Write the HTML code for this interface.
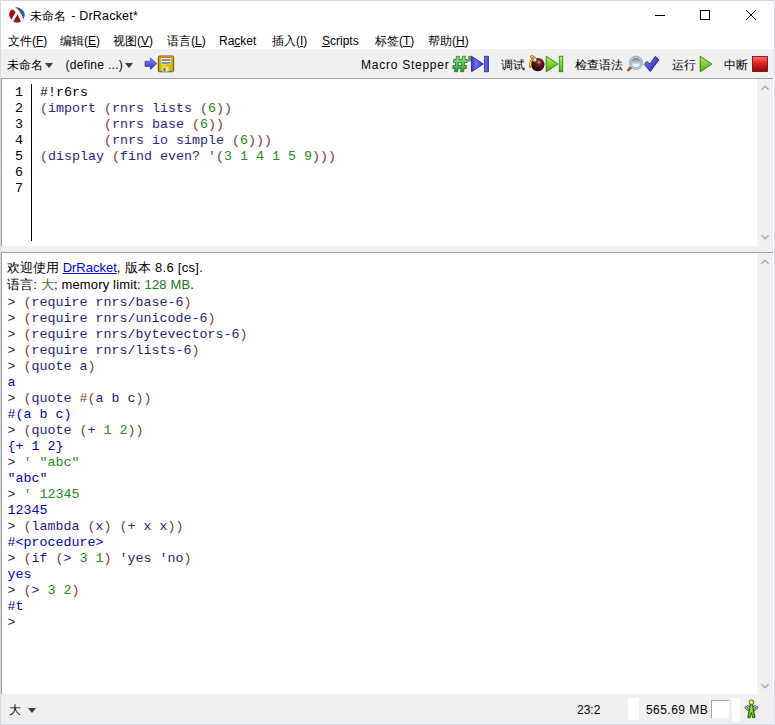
<!DOCTYPE html>
<html><head><meta charset="utf-8">
<style>
*{margin:0;padding:0;box-sizing:border-box}
html,body{width:775px;height:725px;overflow:hidden;background:#fff}
body{position:relative;font-family:"Liberation Sans",sans-serif;font-size:12px;color:#000}
.a{position:absolute;white-space:pre}
.ui{font-family:"Liberation Sans",sans-serif;font-size:12px;line-height:14px}
.mono{font-family:"Liberation Mono",monospace;font-size:13.333px;line-height:16px}
.p{color:#843c24}.s{color:#262680}.c{color:#228b22}.o{color:#0000c8}.k{color:#000}.pr{color:#303030}
.tri{position:absolute;width:0;height:0;border-left:4px solid transparent;border-right:4px solid transparent;border-top:5px solid #3c3c3c}
.sb{position:absolute;background:#f0f0f0}
</style></head><body>
<!-- window borders -->
<div class="a" style="left:0;top:0;width:775px;height:1px;background:#d6d8dc"></div>
<div class="a" style="left:0;top:0;width:1px;height:725px;background:#d6d8dc"></div>
<div class="a" style="left:774px;top:0;width:1px;height:725px;background:#dcdde0"></div>

<!-- logo -->
<svg class="a" style="left:9px;top:7px" width="16" height="16" viewBox="0 0 16 16">
<path d="M6.1 0.1 C10 0.2 15.5 3 15.7 7.2 C15.8 9 15.2 10.8 14.3 12 C12.8 7.5 10 3 6.1 0.1Z" fill="#3a55a8"/>
<path d="M3.2 2.3 C4.5 3 5.7 4 6.6 5.4 L2.4 12.5 C0.8 11 0 8.8 0.2 6.8 C0.5 5 1.5 3.3 3.2 2.3Z" fill="#9c1016"/>
<path d="M8.5 7.2 L12 14.5 C10.5 15.5 8.5 15.8 6.6 15.6 C5.8 15.5 5 15.2 4.4 14.6 Z" fill="#9c1016"/>
</svg>
<div class="a ui" style="left:30px;top:9px">未命名<span style="font-size:12.5px;letter-spacing:0.2px;margin-left:1.5px"> - DrRacket*</span></div>

<!-- window controls -->
<div class="a" style="left:655px;top:15px;width:10px;height:1px;background:#000"></div>
<div class="a" style="left:700px;top:10px;width:10px;height:10px;border:1px solid #000"></div>
<svg class="a" style="left:745px;top:9px" width="12" height="12" viewBox="0 0 12 12"><path d="M1 1L11 11M11 1L1 11" stroke="#000" stroke-width="1"/></svg>

<!-- menu -->
<div class="a ui" style="left:8px;top:34px">文件(<u>F</u>)</div>
<div class="a ui" style="left:60px;top:34px">编辑(<u>E</u>)</div>
<div class="a ui" style="left:113px;top:34px">视图(<u>V</u>)</div>
<div class="a ui" style="left:167px;top:34px">语言(<u>L</u>)</div>
<div class="a ui" style="left:219px;top:34px">Ra<u>c</u>ket</div>
<div class="a ui" style="left:272px;top:34px">插入(<u>I</u>)</div>
<div class="a ui" style="left:322px;top:34px"><u>S</u>cripts</div>
<div class="a ui" style="left:375px;top:34px">标签(<u>T</u>)</div>
<div class="a ui" style="left:428px;top:34px">帮助(<u>H</u>)</div>

<!-- toolbar -->
<div class="a" style="left:1px;top:49px;width:773px;height:29px;background:#f0f0f0"></div>
<div class="a ui" style="left:7px;top:57.6px">未命名</div>
<div class="tri" style="left:45px;top:63px"></div>
<div class="a ui" style="left:65.5px;top:57.6px;letter-spacing:0.3px">(define ...)</div>
<div class="tri" style="left:125px;top:63px"></div>
<svg class="a" style="left:144px;top:55px" width="32" height="18" viewBox="0 0 32 18">
<defs><linearGradient id="ga" x1="0" y1="0" x2="0" y2="1"><stop offset="0" stop-color="#8a8cff"/><stop offset="1" stop-color="#2a2ec0"/></linearGradient>
<linearGradient id="gf" x1="0" y1="0" x2="1" y2="0"><stop offset="0" stop-color="#b89a00"/><stop offset="0.3" stop-color="#f0d820"/><stop offset="1" stop-color="#c8a800"/></linearGradient></defs>
<path d="M1 6.2H6.5V3L12.8 8.5L6.5 14.5V11.5H1Z" fill="url(#ga)" stroke="#2a2a90" stroke-width="0.6"/>
<rect x="14.3" y="1" width="15.4" height="15.8" rx="1.5" fill="url(#gf)" stroke="#5a4800" stroke-width="0.9"/>
<rect x="17" y="1.2" width="10" height="8" fill="#fffbd0"/>
<rect x="17" y="1.2" width="10" height="1.8" fill="#f07010"/>
<rect x="17.5" y="4.2" width="9" height="1.8" fill="#8080a8"/>
<rect x="17.5" y="7" width="9" height="1.8" fill="#8080a8"/>
<rect x="18.5" y="12" width="6" height="4.5" fill="#e0e0e0"/>
<rect x="19.5" y="13" width="2" height="3" fill="#8a7000"/>
</svg>

<div class="a ui" style="left:361px;top:57.6px;letter-spacing:0.75px">Macro Stepper</div>
<svg class="a" style="left:452px;top:55px" width="38" height="18" viewBox="0 0 38 18">
<defs><linearGradient id="gg" x1="0" y1="0" x2="0" y2="1"><stop offset="0" stop-color="#90f090"/><stop offset="1" stop-color="#2a9a2a"/></linearGradient>
<linearGradient id="gb" x1="0" y1="0" x2="1" y2="0"><stop offset="0" stop-color="#3a3ad0"/><stop offset="0.4" stop-color="#7070f8"/><stop offset="1" stop-color="#3030b8"/></linearGradient></defs>
<path d="M3.5 1.3H6.5V4.5H9.5V1.3H12.5V4.5H14.8V7.5H12.5V10.5H14.8V13.5H12.5V16.7H9.5V13.5H6.5V16.7H3.5V13.5H1.2V10.5H3.5V7.5H1.2V4.5H3.5Z M6.5 7.5V10.5H9.5V7.5Z" fill="url(#gg)" stroke="#1a5a1a" stroke-width="0.7" fill-rule="evenodd" transform="translate(8 9) skewX(-7) translate(-8 -9)"/>
<path d="M16.6 1.3H19.2L18.4 6.2H16.4Z" fill="#50c050" stroke="#1a5a1a" stroke-width="0.5"/>
<path d="M19.5 1.2L31.3 9L19.5 16.8Z" fill="url(#gb)" stroke="#202080" stroke-width="0.8"/>
<rect x="32.6" y="1.2" width="3.8" height="15.6" fill="url(#gb)" stroke="#202080" stroke-width="0.7"/>
</svg>

<div class="a ui" style="left:501px;top:57.6px">调试</div>
<svg class="a" style="left:528px;top:55px" width="36" height="18" viewBox="0 0 36 18">
<defs><radialGradient id="gbm" cx="0.58" cy="0.32" r="0.75"><stop offset="0" stop-color="#f0a8a8"/><stop offset="0.22" stop-color="#7a2222"/><stop offset="0.65" stop-color="#3a0808"/><stop offset="1" stop-color="#120202"/></radialGradient>
<linearGradient id="ggr" x1="0" y1="0" x2="0" y2="1"><stop offset="0" stop-color="#b0f060"/><stop offset="1" stop-color="#50b010"/></linearGradient></defs>
<circle cx="9.8" cy="9.6" r="6.7" fill="url(#gbm)"/>
<ellipse cx="6.3" cy="4.3" rx="2.6" ry="2.2" transform="rotate(40 6.3 4.3)" fill="#d8e0e8" stroke="#505860" stroke-width="0.6"/>
<path d="M3.2 1.6C5 0.8 5.6 2.6 4.6 4C3.6 5.5 2.2 6.5 2.6 8.5C2.8 9.6 2.4 10.8 2.1 11.5" fill="none" stroke="#7a5a00" stroke-width="2.3" stroke-linecap="round"/>
<path d="M3.2 1.6C5 0.8 5.6 2.6 4.6 4C3.6 5.5 2.2 6.5 2.6 8.5C2.8 9.6 2.4 10.8 2.1 11.5" fill="none" stroke="#ffd000" stroke-width="1.2" stroke-linecap="round"/>
<path d="M18.2 1.2L30 9L18.2 16.8Z" fill="url(#ggr)" stroke="#2a6a00" stroke-width="0.8"/>
<rect x="31.2" y="1.2" width="3.6" height="15.6" fill="url(#ggr)" stroke="#2a6a00" stroke-width="0.7"/>
</svg>

<div class="a ui" style="left:575px;top:57.6px">检查语法</div>
<svg class="a" style="left:626px;top:55px" width="34" height="18" viewBox="0 0 34 18">
<defs><linearGradient id="gm" x1="0" y1="0" x2="0" y2="1"><stop offset="0" stop-color="#606868"/><stop offset="0.55" stop-color="#c8d8d8"/><stop offset="0.7" stop-color="#f0fffa"/><stop offset="1" stop-color="#d8f0ec"/></linearGradient>
<linearGradient id="gc" x1="0" y1="0" x2="1" y2="1"><stop offset="0" stop-color="#8080ff"/><stop offset="1" stop-color="#2020a0"/></linearGradient></defs>
<path d="M2.3 15L5 12.3" stroke="#b05a20" stroke-width="2.8" stroke-linecap="round"/>
<circle cx="10" cy="7.8" r="5.7" fill="url(#gm)" stroke="#b8c8e0" stroke-width="2"/><circle cx="10" cy="7.8" r="6.7" fill="none" stroke="#7890b0" stroke-width="0.6"/><circle cx="10" cy="7.8" r="4.7" fill="none" stroke="#8898b0" stroke-width="0.5"/>
<path d="M18.3 9.3L20.8 6.5L24 9L29.3 1.3L33 4.8L24.3 16.5Z" fill="url(#gc)" stroke="#18187a" stroke-width="0.8" stroke-linejoin="round"/>
</svg>

<div class="a ui" style="left:672px;top:57.6px">运行</div>
<svg class="a" style="left:699px;top:55px" width="14" height="18" viewBox="0 0 14 18">
<path d="M1.2 1.2L13 9L1.2 16.8Z" fill="url(#ggr)" stroke="#2a6a00" stroke-width="0.8"/>
</svg>
<div class="a ui" style="left:724px;top:57.6px">中断</div>
<svg class="a" style="left:752px;top:56px" width="16" height="16" viewBox="0 0 16 16">
<defs><linearGradient id="gr" x1="0" y1="0" x2="0" y2="1"><stop offset="0" stop-color="#ff7070"/><stop offset="0.45" stop-color="#e02020"/><stop offset="1" stop-color="#900808"/></linearGradient></defs>
<rect x="0.5" y="0.5" width="15" height="15" fill="url(#gr)" stroke="#700000" stroke-width="0.8"/>
</svg>

<!-- editor -->
<div class="a" style="left:1px;top:78px;width:772px;height:168px;background:#fff;border-top:1px solid #a0a0a0;border-left:1px solid #a0a0a0"></div>
<div class="sb" style="left:757px;top:79px;width:16px;height:167px"></div>
<svg class="a" style="left:760px;top:84px" width="10" height="8" viewBox="0 0 10 8"><path d="M1.4 5.8L5 2.2L8.6 5.8" fill="none" stroke="#a8a8a8" stroke-width="1.4"/></svg>
<svg class="a" style="left:760px;top:233px" width="10" height="8" viewBox="0 0 10 8"><path d="M1.4 2.2L5 5.8L8.6 2.2" fill="none" stroke="#a8a8a8" stroke-width="1.4"/></svg>
<div class="a" style="left:31px;top:84px;width:1px;height:157px;background:#000"></div>
<div class="a mono k" style="left:14px;top:85px;width:9px;text-align:right">1
2
3
4
5
6
7</div>
<div class="a mono" style="left:40px;top:85px"><span class="k">#!r6rs</span>
<span class="p">(</span><span class="s">import</span> <span class="p">(</span><span class="s">rnrs lists</span> <span class="p">(</span><span class="c">6</span><span class="p">))</span>
        <span class="p">(</span><span class="s">rnrs base</span> <span class="p">(</span><span class="c">6</span><span class="p">))</span>
        <span class="p">(</span><span class="s">rnrs io simple</span> <span class="p">(</span><span class="c">6</span><span class="p">)))</span>
<span class="p">(</span><span class="s">display</span> <span class="p">(</span><span class="s">find even?</span> <span class="c">'</span><span class="p">(</span><span class="c">3 1 4 1 5 9</span><span class="p">)))</span></div>

<!-- separator -->
<div class="a" style="left:1px;top:246px;width:772px;height:6px;background:#f0f0f0"></div>

<!-- repl -->
<div class="a" style="left:1px;top:252px;width:772px;height:442px;background:#fff;border-top:1px solid #a0a0a0;border-left:1px solid #a0a0a0"></div>
<div class="sb" style="left:757px;top:253px;width:16px;height:441px"></div>
<svg class="a" style="left:760px;top:258px" width="10" height="8" viewBox="0 0 10 8"><path d="M1.4 5.8L5 2.2L8.6 5.8" fill="none" stroke="#a8a8a8" stroke-width="1.4"/></svg>
<svg class="a" style="left:760px;top:682px" width="10" height="8" viewBox="0 0 10 8"><path d="M1.4 2.2L5 5.8L8.6 2.2" fill="none" stroke="#a8a8a8" stroke-width="1.4"/></svg>

<div class="a" style="left:7px;top:259.5px;font-size:13px;line-height:16px">欢迎使用 <span style="color:#0000ee;text-decoration:underline">DrRacket</span><span style="letter-spacing:0.28px">, 版本 8.6 [cs].</span></div>
<div class="a" style="left:7px;top:277px;font-size:13px;line-height:16px;letter-spacing:0.15px">语言: <span style="color:#1a7a1a">大</span>; memory limit: <span style="color:#1a7a1a">128 MB</span>.</div>
<div class="a mono" style="left:7.5px;top:295px"><span class="pr">&gt; </span><span class="p">(</span><span class="s">require rnrs/base-6</span><span class="p">)</span>
<span class="pr">&gt; </span><span class="p">(</span><span class="s">require rnrs/unicode-6</span><span class="p">)</span>
<span class="pr">&gt; </span><span class="p">(</span><span class="s">require rnrs/bytevectors-6</span><span class="p">)</span>
<span class="pr">&gt; </span><span class="p">(</span><span class="s">require rnrs/lists-6</span><span class="p">)</span>
<span class="pr">&gt; </span><span class="p">(</span><span class="s">quote a</span><span class="p">)</span>
<span class="o">a</span>
<span class="pr">&gt; </span><span class="p">(</span><span class="s">quote</span> <span class="p">#(</span><span class="s">a b c</span><span class="p">))</span>
<span class="o">#(a b c)</span>
<span class="pr">&gt; </span><span class="p">(</span><span class="s">quote</span> <span class="p">(</span><span class="s">+</span> <span class="c">1 2</span><span class="p">))</span>
<span class="o">{+ 1 2}</span>
<span class="pr">&gt; </span><span class="c">' "abc"</span>
<span class="o">"abc"</span>
<span class="pr">&gt; </span><span class="c">' 12345</span>
<span class="o">12345</span>
<span class="pr">&gt; </span><span class="p">(</span><span class="s">lambda</span> <span class="p">(</span><span class="s">x</span><span class="p">)</span> <span class="p">(</span><span class="s">+ x x</span><span class="p">))</span>
<span class="o">#&lt;procedure&gt;</span>
<span class="pr">&gt; </span><span class="p">(</span><span class="s">if</span> <span class="p">(</span><span class="s">&gt;</span> <span class="c">3 1</span><span class="p">)</span> <span class="s">'yes 'no</span><span class="p">)</span>
<span class="o">yes</span>
<span class="pr">&gt; </span><span class="p">(</span><span class="s">&gt;</span> <span class="c">3 2</span><span class="p">)</span>
<span class="o">#t</span>
<span class="pr">&gt;</span></div>

<!-- status bar -->
<div class="a" style="left:1px;top:694px;width:773px;height:30px;background:#f0f0f0"></div>
<div class="a" style="left:0;top:724px;width:775px;height:1px;background:#d5dce6"></div>
<div class="a ui" style="left:9px;top:703px">大</div>
<div class="tri" style="left:28px;top:708px"></div>
<div class="a ui" style="left:577px;top:703px">23:2</div>
<div class="a" style="left:628px;top:698px;width:11px;height:22px;background:#fff"></div>
<div class="a ui" style="left:646px;top:703px;letter-spacing:0.45px">565.69 MB</div>
<div class="a" style="left:711px;top:700px;width:18px;height:18px;background:#fff;border-top:1px solid #a0a0a0;border-left:1px solid #a0a0a0"></div>
<div class="a" style="left:732px;top:698px;width:8px;height:23px;background:#fff"></div>
<svg class="a" style="left:744px;top:699px" width="14" height="20" viewBox="0 0 14 20">
<defs><linearGradient id="gw" x1="0" y1="0" x2="1" y2="0"><stop offset="0" stop-color="#3a9a10"/><stop offset="0.5" stop-color="#8af030"/><stop offset="1" stop-color="#3a9a10"/></linearGradient></defs>
<path d="M5.8 6.4L1.6 8.5L5.2 11.6M9 6.4L13.2 8.5L9.6 11.6" fill="none" stroke="#404040" stroke-width="2.2" stroke-linejoin="round"/>
<path d="M5.8 6.4L1.6 8.5L5.2 11.6M9 6.4L13.2 8.5L9.6 11.6" fill="none" stroke="#f0f0f0" stroke-width="0.9" stroke-linejoin="round"/>
<path d="M6.3 5.6L8.5 5.6L9.4 11L11.1 18.2Q10 19.2 8.7 18.7L7.4 13.6L6.1 18.7Q4.8 19.2 3.7 18.2L5.4 11Z" fill="url(#gw)" stroke="#1a4a00" stroke-width="0.9" stroke-linejoin="round"/>
<circle cx="7.4" cy="3.3" r="2.4" fill="#b0f050" stroke="#2a6a00" stroke-width="0.8"/>
<circle cx="7.2" cy="2.8" r="1.1" fill="#e0ff90"/>
</svg>
</body></html>
